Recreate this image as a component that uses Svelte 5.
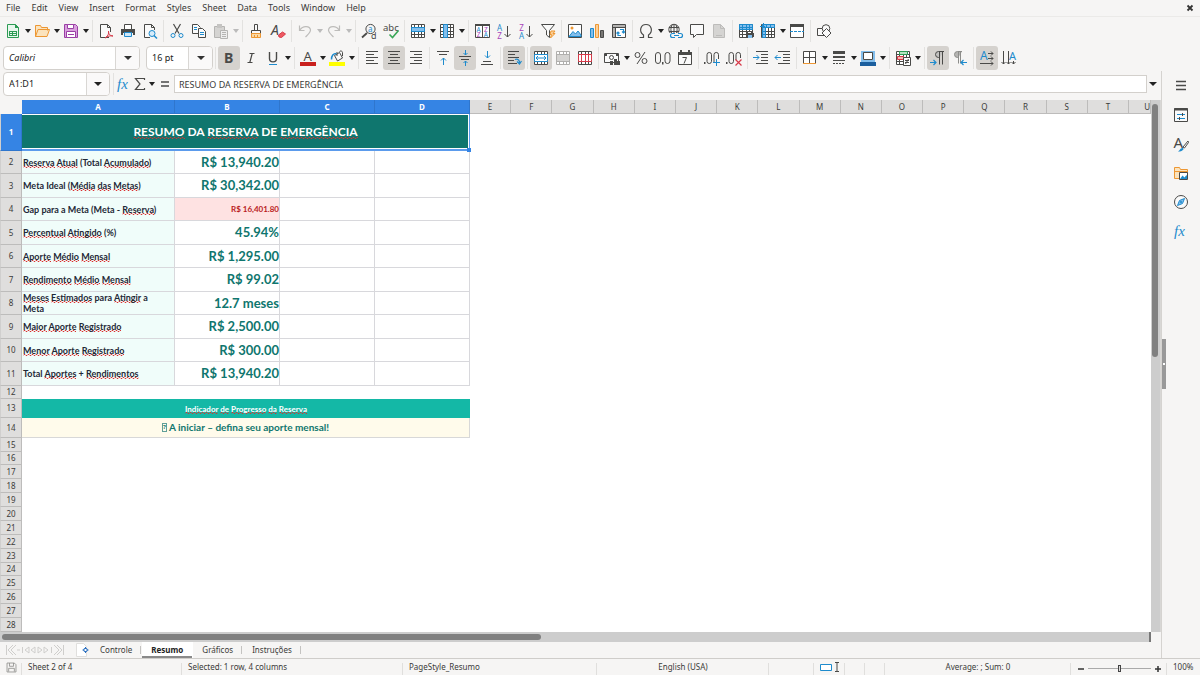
<script>
  const K = '#4a4a48', B = '#1e8bcd', L = '#83beec', R = '#d73a49', G = '#8d8d8a';
  const grid = (c = K) =>
    `<path fill="#fff" stroke="${c}" d="M1.5 1.5h13v13h-13z"/><path stroke="${c}" d="M1.5 4.5h13M1.5 8.5h13M1.5 11.5h13M4.5 1.5v13M8.5 1.5v13M11.5 1.5v13"/>`;
  const lines = (rows, c = K) => `<path stroke="${c}" d="${rows.map(([x, y, w]) => `M${x} ${y}.5h${w}`).join('')}"/>`;
  const letter = (x, y, s, c, t, extra = '') =>
    `<text x="${x}" y="${y}" font-size="${s}" fill="${c}" font-family="Noto Sans, sans-serif" ${extra}>${t}</text>`;

  const icons = {
    new: `<path fill="#e9f7ee" stroke="#2c9b54" d="M2.5 1.5h8l3 3v10h-11z"/><path fill="#2c9b54" d="M10 1v4h4zM4 8h8v5H4z"/><path stroke="#e9f7ee" d="M5 9.5h2M8 9.5h3M5 11.5h2M8 11.5h3"/>`,
    open: `<path fill="#fbe3bd" stroke="#ed9733" d="M1.5 13.5v-11h5l1 2h6v3M1.5 13.5l2.5-7h11.5l-2.5 7z"/>`,
    save: `<path fill="#d9a0de" stroke="#9a3fa5" d="M1.5 1.5h11l2 2v11h-13z"/><path fill="#fff" stroke="#9a3fa5" d="M4.5 1.5h6v4h-6zM3.5 8.5h9v6h-9z"/><path stroke="#9a3fa5" d="M5 11.5h6"/>`,
    pdf: `<path fill="#fafafa" stroke="${K}" d="M11 14.5H2.5v-13h7l3 3V9"/><path stroke="${K}" d="M9.5 1.5v3h3"/><path stroke="${R}" d="M7 15c3-2 4-4 3.5-7 0 3 1 4.5 4.5 5-3-.5-5 0-8 2z"/>`,
    print: `<path fill="#fff" stroke="${K}" d="M4.5 6V1.5h7V6"/><path fill="${K}" d="M1 6h14v6h-2v-2H3v2H1z"/><path fill="#cfe6f7" stroke="${B}" d="M4.5 9.5h7v4h-7z"/>`,
    preview: `<path fill="#fafafa" stroke="${K}" d="M8 14.5H2.5v-13h7l3 3V7"/><path stroke="${K}" d="M9.5 1.5v3h3"/><circle cx="10" cy="10.5" r="3" fill="#d8ecfa" stroke="${B}"/><path stroke="${B}" stroke-width="1.5" d="M12 12.5l3 3"/>`,
    cut: `<path stroke="${K}" stroke-width="1.2" d="M4.5 1l5.5 9.5M11.5 1L6 10.5"/><circle cx="4" cy="12.5" r="2" stroke="${B}"/><circle cx="12" cy="12.5" r="2" stroke="${B}"/>`,
    copy: `<path fill="#fafafa" stroke="${K}" d="M7 10.5H1.5v-9h5l3 3"/><path stroke="${B}" d="M3 4.5h3M3 6.5h3"/><path fill="#fafafa" stroke="${K}" d="M7.5 5.5h4l3 3v6h-7z"/><path stroke="${B}" d="M9 9.5h4M9 11.5h4"/>`,
    paste: `<path fill="#d5d4d2" stroke="#b5b4b2" d="M1.5 3.5h10v11h-10z"/><path fill="#c5c4c2" d="M4 1h5v4H4z"/><path fill="#eee" stroke="#b5b4b2" d="M7.5 7.5h7v8h-7z"/><path stroke="#b5b4b2" d="M9 9.5h4M9 11.5h4M9 13.5h4"/>`,
    clone: `<path fill="#fafafa" stroke="${K}" d="M6.5 7.5v-6h3v6M3.5 7.5h9v3h-9z"/><path fill="#fbd9a5" stroke="#ed9733" d="M3.5 10.5h9v4h-9zM6.5 14v-2M9.5 14v-2"/>`,
    clear: `${letter(1, 12, 14, K, 'A', 'font-style="italic"')}<path fill="#ee5a62" stroke="${R}" d="M8.5 12l4-3 3 2-4 3.5-2.5-.5z"/>`,
    undo: `<path stroke="#bdbcba" stroke-width="1.2" d="M2.5 2.5v5h5M3 7c3-5 10-4 10.5 0 0 2.5-2 4-5 7"/>`,
    redo: `<path stroke="#bdbcba" stroke-width="1.2" d="M13.5 2.5v5h-5M13 7c-3-5-10-4-10.5 0 0 2.5 2 4 5 7"/>`,
    find: `<circle cx="9.5" cy="6" r="4.6" stroke="${K}"/><path stroke="${K}" stroke-width="1.8" d="M6 10l-5 4.5"/>${letter(7, 8.5, 8, B, 'a')}${letter(10, 15.5, 9, K, 'd')}`,
    abc: `${letter(0, 7.5, 9.5, K, 'abc')}<path stroke="#3aa757" stroke-width="1.6" d="M6.5 11.5l3 3 6-7"/>`,
    row: `${grid()}<path fill="${L}" stroke="${B}" d="M1.5 4.5h13v4h-13z"/>`,
    col: `${grid()}<path fill="${L}" stroke="${B}" d="M4.5 1.5h4v13h-4z"/>`,
    sort: `<path fill="#fff" stroke="${K}" d="M1.5 1.5h14v13h-14zM8.5 2v13"/><path stroke="${K}" stroke-width="2" d="M1 2h15"/>${letter(2.5, 8.5, 6.5, B, 'A')}${letter(2.8, 14, 6.5, '#a846b9', 'Z')}${letter(10, 8.5, 6.5, '#a846b9', 'Z')}${letter(9.8, 14, 6.5, B, 'A')}`,
    az: `${letter(1, 7.5, 8, B, 'A')}${letter(1.2, 15.5, 8, '#a846b9', 'Z')}<path stroke="${K}" d="M11.5 3v11M8.5 11l3 3 3-3"/>`,
    za: `${letter(1.2, 7.5, 8, '#a846b9', 'Z')}${letter(1, 15.5, 8, B, 'A')}<path stroke="${K}" d="M11.5 3v11M8.5 11l3 3 3-3"/>`,
    filter: `<path fill="#fafafa" stroke="${K}" d="M1.5 1.5h13l-5 6v7l-3-2.5V7.5z"/><path fill="#fbd09a" stroke="#ed9733" d="M11 8h4l-2 2.5h2L10.5 15l1-3.5H10z"/>`,
    image: `<path fill="#fff" stroke="${K}" d="M1.5 1.5h13v13h-13z"/><path fill="${L}" stroke="${B}" d="M2 13.5l4-5 2.5 2.5L11 8l3 4v1.5z"/><circle cx="5" cy="5" r="1.5" fill="#ed9733"/>`,
    chart: `<path fill="${L}" stroke="${B}" d="M1.5 5.5h3v9h-3z"/><path fill="#fbd09a" stroke="#ed9733" d="M6.5 1.5h3v13h-3z"/><path fill="#797774" stroke="${K}" d="M11.5 7.5h3v7h-3z"/>`,
    pivot: `<path fill="#fff" stroke="${K}" d="M1.5 1.5h13v13h-13zM1.5 4.5h13M4.5 1.5v13"/><path fill="#b5b4b2" d="M2 2h12v2H2zM2 5h2v9H2z"/><path stroke="${B}" stroke-width="1.2" d="M7 9v3.5h3M5.5 10.5L7 9l1.5 1.5M9 6.5h3.5V10M11 8.5l1.5 1.5L14 8.5"/>`,
    omega: `<path stroke="${K}" stroke-width="1.2" d="M1.5 14.5h4V12C.5 8.5 2.5 1.5 8 1.5s7.5 7 2.5 10.5v2.5h4"/>`,
    link: `<circle cx="7" cy="6.5" r="5.2" stroke="${K}"/><path stroke="${K}" d="M2 4.5h10M2 8.5h10M7 1.5v10M5 2C3.5 5 3.5 8 5 11M9 2c1.5 3 1.5 6 0 9"/><path fill="#f6f5f4" d="M3 10h13v6H3z"/><path stroke="${B}" stroke-width="1.2" d="M8 10.5H5.5a2 2 0 0 0 0 4H8M11 10.5h2.5a2 2 0 0 1 0 4H11M7 12.5h5"/>`,
    comment: `<path fill="#fafafa" stroke="${K}" d="M1.5 1.5h13v10h-7l-3 3v-3h-3z"/>`,
    page: `<path fill="#d5d4d2" stroke="#bdbcba" d="M2.5 1.5h7l4 4v9h-11z"/><path stroke="#bdbcba" d="M9.5 1.5v4h4M5 12.5h6"/>`,
    printarea: `${grid()}<path fill="${L}" stroke="${B}" d="M1.5 1.5h13v5h-13z"/><path stroke="${B}" d="M4.5 1.5v5M8.5 1.5v5M11.5 1.5v5M1.5 4.5h13"/><path fill="#fff" stroke="${K}" d="M9.5 8.5h4v2h-4z"/><path fill="${K}" d="M8 10h8v4H8z"/><path fill="${L}" d="M10 12h4v3h-4z"/>`,
    freeze: `${grid()}<path fill="${L}" stroke="${B}" d="M2.5 1.5h12v3h-12zM2.5 4.5h3v10h-3z"/><path stroke="${B}" d="M0 3.5h5M3.5 0v5M6.5 1.5v3M10.5 1.5v3M2.5 8.5h3M2.5 11.5h3"/>`,
    split: `<path fill="#fff" stroke="${K}" d="M1.5 2.5h13v12h-13z"/><path stroke="${K}" stroke-width="3" d="M1 2.5h14"/><path stroke="${B}" stroke-dasharray="3 1" d="M1 8.5h14"/>`,
    shapes: `<path fill="#fafafa" stroke="${K}" d="M1.5 5.5h7v7h-7z"/><circle cx="10" cy="5.5" r="3.8" fill="#fafafa" stroke="${K}"/><path fill="#fafafa" stroke="${K}" d="M10.5 5.5l4.5 4.5-4.5 4.5L6 10z"/>`,
    bold: letter(3, 13, 14, K, 'B', 'font-weight="700"'),
    italic: `<path stroke="${K}" stroke-width="1.2" d="M6.5 3.5h5M4.5 12.5h5M9.2 3.5l-2.4 9"/>`,
    underline: `<path stroke="${K}" stroke-width="1.4" d="M4.5 2v6.5c0 4.5 7 4.5 7 0V2"/><path stroke="${B}" d="M4 14.5h8"/>`,
    color: `${letter(3.5, 11, 13, K, 'A')}<path fill="#c9211e" d="M0 12h16v4H0z"/>`,
    fill: `<path fill="#fafafa" stroke="${K}" d="M5.5 5.5l5-3 3 5.5-5 3zM8 2v4M10.5 2c1-2 3-1 3 1v3"/><path stroke="${B}" stroke-width="1.5" d="M2.5 9.5c0-4 1-6 5-6"/><path fill="#ff0" d="M0 12h16v4H0z"/>`,
    left: lines([[2, 1, 12], [2, 4, 8], [2, 7, 12], [2, 10, 8], [2, 13, 12]]),
    center: lines([[2, 1, 12], [4, 4, 8], [2, 7, 12], [4, 10, 8], [2, 13, 12]]),
    right: lines([[2, 1, 12], [6, 4, 8], [2, 7, 12], [6, 10, 8], [2, 13, 12]]),
    top: `${lines([[2, 1, 12], [4, 4, 8]])}<path stroke="${B}" d="M8.5 15V8M6 10.5L8.5 8l2.5 2.5"/>`,
    middle: `${lines([[2, 6, 12], [4, 9, 8]])}<path stroke="${B}" d="M8.5 0v5M6.5 3l2 2 2-2M8.5 16v-5M6.5 13l2-2 2 2"/>`,
    bottom: `${lines([[4, 11, 8], [2, 14, 12]])}<path stroke="${B}" d="M8.5 1v7M6 5.5L8.5 8 11 5.5"/>`,
    wrap: `${lines([[2, 1, 11], [2, 4, 7], [2, 7, 11], [2, 10, 6], [2, 13, 9]])}<path stroke="${B}" stroke-width="1.2" d="M9 9.500c3-1 5 1 4.500 4M11 11.500l2.500 2.500 2-3"/>`,
    merge: `${grid()}<path fill="#fff" stroke="${B}" d="M1.5 4.5h13v7h-13z"/><path stroke="${B}" d="M3 8h10M5 6L3 8l2 2M11 6l2 2-2 2"/>`,
    unmerge: `${grid('#b0afad')}<path fill="#d5d4d2" d="M2 5h12v6H2z"/>`,
    unsplit: `${grid()}<path fill="#fff" stroke="${R}" d="M1.5 4.5h13v7h-13zM4.5 4.5v7M8.5 4.5v7M11.5 4.5v7"/>`,
    currency: `<path fill="#fafafa" stroke="${K}" d="M.5 3.5h14v9H.5z"/><circle cx="7.500" cy="7.500" r="2" stroke="${K}"/><path fill="${K}" d="M1 4h2v2H1zM12 4h2v2h-2zM6 11h3v4H6zM10 9h3v6h-3zM13 11h3v4h-3z"/>`,
    percent: `<circle cx="4.5" cy="5" r="2.5" stroke="${K}"/><circle cx="11.5" cy="11" r="2.5" stroke="${K}"/><path stroke="${K}" d="M12 2L4 14"/>`,
    number: `<rect x=".5" y="2.5" width="5" height="11" rx="2.5" stroke="${K}"/><rect x="10" y="2.5" width="5" height="11" rx="2.5" stroke="${K}"/><path fill="${K}" d="M7 12h1.500v2.500H7z"/>`,
    date: `<path fill="#fafafa" stroke="${K}" d="M1.5 2.5h13v12h-13z"/><path fill="${K}" d="M1 2h14v3H1zM3 0h2v3H3zM11 0h2v3h-2z"/><path stroke="${K}" d="M5.5 7.5h4l-2.500 6"/>`,
    decadd: `<path fill="${K}" d="M0 12h1.500v2H0z"/><rect x="3" y="2.5" width="4.5" height="11" rx="2.2" stroke="${K}"/><path stroke="${K}" d="M10 12V4.700a2.200 2.200 0 0 1 4.500 0V9"/><path stroke="${B}" d="M9 12.5h7M12.5 9v7"/>`,
    decdel: `<path fill="${K}" d="M0 12h1.500v2H0z"/><rect x="3" y="2.5" width="4.5" height="11" rx="2.2" stroke="${K}"/><path stroke="${K}" d="M10 10V4.700a2.200 2.200 0 0 1 4.500 0V8"/><path stroke="${R}" stroke-width="1.2" d="M9.5 9.5l6 6M15.5 9.5l-6 6"/>`,
    indent: `${lines([[3, 1, 12], [8, 4, 7], [8, 7, 7], [8, 10, 7], [3, 13, 12]])}<path stroke="${B}" d="M0 7.5h6M3.5 5L6 7.5 3.5 10"/>`,
    outdent: `${lines([[3, 1, 12], [8, 4, 7], [8, 7, 7], [8, 10, 7], [3, 13, 12]])}<path stroke="${B}" d="M0 7.5h6M2.5 5L0 7.5 2.5 10"/>`,
    borders: `<path fill="#fff" stroke="${K}" d="M1.5 1.5h12v12h-12zM7.5 1.5v12M1.5 7.5h12"/><path stroke="#ed9733" d="M1 13.5h13"/>`,
    linestyle: `<path stroke="${K}" stroke-width="3" d="M2 2.500h12"/><path stroke="${K}" stroke-width="2" d="M2 7h12"/><path stroke="${K}" d="M2 10.500h12"/><path stroke="${K}" stroke-dasharray="2 1" d="M2 13.500h12"/>`,
    linecolor: `<path fill="#fff" stroke="${L}" stroke-width="2" d="M2 2h12v9H2z"/><path stroke="${K}" d="M3.500 2.500h9v7h-9z"/><path fill="#1c5f9e" d="M0 12h16v4H0z"/>`,
    cond: `${grid()}<path fill="#b6e3c1" stroke="#2c9b54" d="M4.500 1.500h8v3h-8z"/><path fill="#f7b4b0" stroke="${R}" d="M2.500 6.500h6v3h-6z"/><path fill="#fff" stroke="${K}" d="M8.500 7.500h7v8h-7z"/><path stroke="${K}" d="M10 10.500h4M10 12.500h4M13.500 9l-3 5"/>`,
    ltr: `<path fill="#c3c2c0" stroke="${K}" d="M14 1.500H8.500a3 3 0 0 0 0 6h1M9.500 1.500v13M12.500 1.500v13"/><path stroke="${B}" stroke-width="1.2" d="M0 12.500h6M3.500 10L6 12.500 3.500 15"/>`,
    rtl: `<path fill="#b5b4b2" stroke="${G}" d="M10 1.500H5.500a3 3 0 0 0 0 6h1M6.500 1.500v12M8.500 1.500v12"/><path stroke="${B}" stroke-width="1.2" d="M9 12.500h6M11.500 10L9 12.500l2.500 2.500"/>`,
    horiz: `${letter(1, 10, 12, B, 'A')}<path stroke="${K}" d="M9 3.500h5M9 8.500h5M1 13.500h13M12 1.500l2 2-2 2M12 6.500l2 2-2 2M12 11.500l2 2-2 2"/>`,
    vert: `${letter(8, 10, 11, B, 'A')}<path stroke="${K}" d="M2.500 1v13M7.500 1v13M12.500 11v3M.5 12l2 2 2-2M5.500 12l2 2 2-2M10.500 12l2 2 2-2"/>`,
    fx: letter(1, 12.5, 15, B, 'fx', 'font-style="italic" style="font-family:\'Liberation Serif\',serif"'),
    sigma: `<path stroke="${K}" stroke-width="1.2" d="M12.500 4V2.500h-9l4.500 5.500-4.500 5.500h9V12"/>`,
    menu: `<path stroke="${K}" stroke-width="1.6" d="M3 3.500h10M3 7.500h10M3 11.500h10"/>`,
    props: `<path fill="#fafafa" stroke="${K}" d="M1.5 1.5h13v13h-13z"/><path stroke="${K}" stroke-width="2" d="M1 2.500h14"/><path stroke="${B}" d="M4 7.500h8M4 11.500h8"/><path stroke="${K}" d="M9.500 6v3M6.500 10v3"/>`,
    style: `${letter(0.5, 12, 15, K, 'A')}<path fill="#fff" stroke="${K}" d="M15 5l-5 6 1.500 1 4-5.500z"/><path fill="${B}" d="M4 15.500c3 0 3-4 6-3.500 2 1-1 4-6 3.500z"/>`,
    gallery: `<path fill="#fbe3bd" stroke="#ed9733" d="M1.500 13.500v-11h5l1 2h7v9z"/><path stroke="#ed9733" d="M1.500 6.500h13"/><path fill="#fff" stroke="${K}" d="M6.500 7.500h8v7h-8z"/><path fill="${B}" d="M7 14l2.500-3.500 2 2 2-2.500.5 1v3z"/>`,
    navigator: `<circle cx="8" cy="8" r="6.500" fill="#fafafa" stroke="${K}"/><path fill="${L}" stroke="${B}" d="M11.500 4.500l-2 5-5 2 2-5z"/><circle cx="8" cy="8" r="1" fill="${B}"/>`,
    doc: `<path stroke="#8d8d8a" d="M2.500 2.500h9l2 2v9h-11zM5.500 2.500v4h5v-4M4.500 13v-4h7v4"/>`
  };

  // Toolbar entries: name, label, flags (v = has a drop-down arrow, a = active, d = disabled); '|' separates groups.
  const standard = [
    ['new', 'New', 'v'], ['open', 'Open', 'v'], ['save', 'Save', 'v'], '|',
    ['pdf', 'Export as PDF'], ['print', 'Print'], ['preview', 'Print Preview'], '|',
    ['cut', 'Cut'], ['copy', 'Copy'], ['paste', 'Paste', 'vd'], '|',
    ['clone', 'Clone Formatting'], ['clear', 'Clear Formatting'], '|',
    ['undo', 'Undo', 'vd'], ['redo', 'Redo', 'vd'], '|',
    ['find', 'Find and Replace'], ['abc', 'Spelling'], '|',
    ['row', 'Row', 'v'], ['col', 'Column', 'v'], '|',
    ['sort', 'Sort'], ['az', 'Sort Ascending'], ['za', 'Sort Descending'], ['filter', 'AutoFilter'], '|',
    ['image', 'Insert Image'], ['chart', 'Insert Chart'], ['pivot', 'Insert Pivot Table'], '|',
    ['omega', 'Special Character', 'v'], ['link', 'Insert Hyperlink'], ['comment', 'Insert Comment'], ['page', 'Headers and Footers', 'd'], '|',
    ['printarea', 'Define Print Area'], ['freeze', 'Freeze Rows and Columns', 'v'], ['split', 'Split Window'], '|',
    ['shapes', 'Show Draw Functions']
  ];
  const formatting = [
    ['bold', 'Bold', 'a'], ['italic', 'Italic'], ['underline', 'Underline', 'v'], '|',
    ['color', 'Font Color', 'v'], ['fill', 'Background Color', 'v'], '|',
    ['left', 'Align Left'], ['center', 'Center Horizontally', 'a'], ['right', 'Align Right'], '|',
    ['top', 'Align Top'], ['middle', 'Center Vertically', 'a'], ['bottom', 'Align Bottom'], '|',
    ['wrap', 'Wrap Text', 'a'], '|',
    ['merge', 'Merge and Center', 'a'], ['unmerge', 'Merge Cells', 'd'], ['unsplit', 'Unmerge Cells'], '|',
    ['currency', 'Currency', 'v'], ['percent', 'Percent'], ['number', 'Number'], ['date', 'Date'], '|',
    ['decadd', 'Add Decimal Place'], ['decdel', 'Delete Decimal Place'], '|',
    ['indent', 'Increase Indent'], ['outdent', 'Decrease Indent'], '|',
    ['borders', 'Borders', 'v'], ['linestyle', 'Border Style', 'v'], ['linecolor', 'Border Color', 'v'], '|',
    ['cond', 'Conditional Formatting', 'v'], '|',
    ['ltr', 'Left-To-Right', 'a'], ['rtl', 'Right-To-Left'], '|',
    ['horiz', 'Text direction horizontal', 'a'], ['vert', 'Text direction vertical']
  ];
  const menus = ['File', 'Edit', 'View', 'Insert', 'Format', 'Styles', 'Sheet', 'Data', 'Tools', 'Window', 'Help'];
  const columns = [...'ABCDEFGHIJKLMNOPQRSTU'];
  const free = columns.slice(4);

  // Words between underscores carry the spell-check wave.
  const rows = [
    ['_Reserva_ _Atual_ (Total _Acumulado_)', 'R$ 13,940.20'],
    ['Meta Ideal (_Média_ _das_ _Metas_)', 'R$ 30,342.00'],
    ['Gap para a Meta (Meta - _Reserva_)', 'R$ 16,401.80'],
    ['_Percentual_ _Atingido_ (%)', '45.94%'],
    ['_Aporte_ _Médio_ _Mensal_', 'R$ 1,295.00'],
    ['_Rendimento_ _Médio_ _Mensal_', 'R$ 99.02'],
    ['_Meses_ _Estimados_ para _Atingir_ a Meta', '12.7 meses'],
    ['_Maior_ _Aporte_ _Registrado_', 'R$ 2,500.00'],
    ['_Menor_ _Aporte_ _Registrado_', 'R$ 300.00'],
    ['Total _Aportes_ + _Rendimentos_', 'R$ 13,940.20']
  ];
  const blank = Array.from({ length: 14 }, (_, i) => i + 15);
  const sheets = ['Controle', 'Resumo', 'Gráficos', 'Instruções'];
  const panels = [['menu', 'Sidebar Settings'], ['props', 'Properties'], ['style', 'Styles'], ['gallery', 'Gallery'], ['navigator', 'Navigator'], ['fx', 'Functions']];
  let formula = $state('RESUMO DA RESERVA DE EMERGÊNCIA');
  let zoom = $state(50);
</script>

{#snippet icon(name)}
  <svg class="icon" viewBox="0 0 16 16" fill="none" aria-hidden="true">{@html icons[name]}</svg>
{/snippet}

{#snippet tools(list)}
  {#each list as t}
    {#if t === '|'}
      <span class="sep"></span>
    {:else}
      {@const flags = t[2] ?? ''}
      <span class="tool" class:split={flags.includes('v')} class:off={flags.includes('d')}>
        <button class="btn" class:active={flags.includes('a')} aria-label={t[1]} disabled={flags.includes('d')}>{@render icon(t[0])}</button>
        {#if flags.includes('v')}<button class="more" aria-label="{t[1]} options"><i class="caret"></i></button>{/if}
      </span>
    {/if}
  {/each}
{/snippet}

{#snippet spelled(text)}{#each text.split('_') as part, i}{#if i % 2}<span class="wave">{part}</span>{:else}{part}{/if}{/each}{/snippet}

<div class="app">
  <nav class="menubar">
    {#each menus as m}<button>{m}</button>{/each}
    <button class="close" aria-label="Close document"><svg viewBox="0 0 8 8"><path d="M1.5 1.5l5 5M6.5 1.5l-5 5" stroke="#333" stroke-width="1.8" /></svg></button>
  </nav>
  <div class="toolbar">{@render tools(standard)}</div>
  <div class="toolbar second">
    <span class="combo font"><select aria-label="Font Name"><option>Calibri</option></select></span>
    <span class="combo size"><select aria-label="Font Size"><option>16 pt</option></select></span>
    <span class="sep"></span>
    {@render tools(formatting)}
  </div>

  <div class="body">
    <main>
      <div class="formulabar">
        <span class="namebox"><input aria-label="Name Box" value="A1:D1" /><button aria-label="Named ranges"><i class="caret big"></i></button></span>
        <span class="sep"></span>
        <button class="fb" aria-label="Function Wizard">{@render icon('fx')}</button>
        <button class="fb sum" aria-label="Select Function">{@render icon('sigma')}<i class="caret"></i></button>
        <button class="fb eq" aria-label="Formula"><svg viewBox="0 0 8 6"><path d="M0 1h8M0 5h8" stroke="#4a4a48" stroke-width="1.5" /></svg></button>
        <input class="formula" aria-label="Input line" bind:value={formula} />
        <button class="expand" aria-label="Expand Formula Bar"><i class="caret big"></i></button>
      </div>

      <div class="sheetwrap">
        <div class="sheet">
          <table>
            <colgroup>
              <col class="c-head" /><col class="c-a" /><col class="c-b" /><col class="c-c" /><col class="c-c" />
              {#each free as c}<col class:c-last={c === 'U'} />{/each}
            </colgroup>
            <thead>
              <tr><th></th>{#each columns as c, i}<th class:sel={i < 4} scope="col">{c}</th>{/each}</tr>
            </thead>
            <tbody>
              <tr class="r-title">
                <th class="sel" scope="row">1</th>
                <td class="title" colspan="4">{@render spelled('_RESUMO_ DA _RESERVA_ DE _EMERGÊNCIA_')}<i class="handle"></i></td>
                <td colspan="17"></td>
              </tr>
              {#each rows as [label, value], i}
                <tr class="r-data">
                  <th scope="row">{i + 2}</th>
                  <td class="label"><div>{@render spelled(label)}</div></td>
                  <td class="value" class:gap={i === 2}>{value}</td>
                  <td class="cell"></td><td class="cell"></td>
                  <td colspan="17"></td>
                </tr>
              {/each}
              <tr class="r-free"><th scope="row">12</th><td colspan="21"></td></tr>
              <tr class="r-band"><th scope="row">13</th><td class="band" colspan="4">{@render spelled('_Indicador_ _de_ _Progresso_ _da_ _Reserva_')}</td><td colspan="17"></td></tr>
              <tr class="r-note"><th scope="row">14</th><td class="note" colspan="4"><span class="tofu">?</span> A iniciar – defina seu aporte mensal!</td><td colspan="17"></td></tr>
              {#each blank as n}
                <tr class="r-free" class:short={n % 8 === 0}><th scope="row">{n}</th><td colspan="21"></td></tr>
              {/each}
            </tbody>
          </table>
        </div>
        <div class="vscroll"><i></i></div>
      </div>
      <div class="hscroll"><i></i></div>

      <div class="tabs">
        <svg class="tabnav" viewBox="0 0 62 12" fill="none" stroke="#cfcecc" aria-hidden="true"><path d="M2.5 1v10M12 1L7 6l5 5M9 1L4 6l5 5M13 6h3M18.5 3v6M25 3l-4 3 4 3zM31 3l-4 3 4 3zM34 3l4 3-4 3zM40 3l4 3-4 3zM47.5 3v6M50 1l5 5-5 5M53 1l5 5-5 5M59.5 1v10" /></svg>
        <button class="addtab" aria-label="Add sheet"><svg viewBox="0 0 14 14" fill="none"><path d="M.5.5h7l3 3v10H.5z" fill="#fff" stroke="#e0dfdd" /><circle cx="9.5" cy="7" r="1.8" fill="#fff" stroke="#2a6fc0" /><path d="M9.5 4v2M9.5 8v2M6.5 7h2M10.500 7h2" stroke="#2a6fc0" /></svg></button>
        {#each sheets as s}<button class="tab" class:current={s === 'Resumo'}>{s}</button>{/each}
      </div>
    </main>
    <aside>
      <i class="grip"></i>
      {#each panels as [name, label]}<button aria-label={label}>{@render icon(name)}</button>{/each}
    </aside>
  </div>

  <footer>
    <span class="state">{@render icon('doc')}</span>
    <span>Sheet 2 of 4</span>
    <span>Selected: 1 row, 4 columns</span>
    <span>PageStyle_Resumo</span>
    <span class="mid">English (USA)</span>
    <span></span>
    <span class="mode"><svg viewBox="0 0 20 12" fill="none"><path d="M.5 3.5h11v6H.5z" stroke="#1e8bcd" fill="#fff" /><path d="M15 1.5h4M17 1.5v9M15 10.5h4" stroke="#4a4a48" /></svg></span>
    <span></span>
    <span></span>
    <span class="mid">Average: ; Sum: 0</span>
    <span class="zoom">
      <button aria-label="Zoom Out"><svg viewBox="0 0 8 8"><path d="M1 4h6" stroke="#333" stroke-width="1.5" /></svg></button>
      <input type="range" aria-label="Zoom" min="0" max="100" bind:value={zoom} />
      <button aria-label="Zoom In"><svg viewBox="0 0 8 8"><path d="M1 4h6M4 1v6" stroke="#333" stroke-width="1.5" /></svg></button>
    </span>
    <span class="pct">100%</span>
  </footer>
</div>

<style>
  :global(body) { background: #f6f5f4; }
  .app { display: flex; flex-direction: column; height: 100vh; overflow: hidden; background: #f6f5f4; color: #3b3b39; font: 9px/12px 'Noto Sans', sans-serif; }
  .app * { box-sizing: border-box; }
  button, input, select { font: inherit; color: inherit; border: 0; background: none; padding: 0; margin: 0; }
  button { display: flex; align-items: center; justify-content: center; }
  .icon { width: 16px; height: 16px; display: block; flex: none; overflow: visible; }
  .caret { border: 3px solid transparent; border-top: 4px solid #222; border-bottom: 0; }
  .caret.big { border-width: 4px 4px 0; }

  .menubar { display: flex; gap: 11px; height: 17px; padding: 0 6px; border-bottom: 1px solid #ebeae8; flex: none; }
  .close { margin-left: auto; }
  .close svg { width: 8px; height: 8px; }

  .toolbar { display: flex; align-items: center; height: 27px; padding-left: 2px; flex: none; }
  .second { padding-left: 3px; }
  .tool { display: flex; align-items: center; flex: none; }
  .btn { width: 22px; height: 24px; border-radius: 3px; }
  .btn.active { background: #d5d2ce; }
  .more { width: 7px; height: 24px; }
  .off .caret { border-top-color: #bbb; }
  .sep { width: 1px; height: 22px; margin: 0 2px; background: #e3e2e0; flex: none; }
  .split + .sep { margin-left: 3px; }
  .combo { position: relative; height: 24px; border: 1px solid #d3d0cc; border-radius: 4px; background: #fff; flex: none; }
  .combo select { appearance: none; width: 100%; height: 100%; padding-left: 5px; color: #222; }
  .combo::before { content: ''; position: absolute; right: 0; top: 0; bottom: 0; width: 23px; border-left: 1px solid #d9d7d4; border-radius: 0 3px 3px 0; background: #faf9f9; pointer-events: none; }
  .combo::after { content: ''; position: absolute; right: 7px; top: 9px; border: 4px solid transparent; border-top-color: #333; border-bottom: 0; pointer-events: none; }
  .font { width: 137px; margin-right: 6px; }
  .font select { font-style: italic; }
  .size { width: 67px; }

  .body { display: flex; flex: 1; min-height: 0; }
  main { display: flex; flex-direction: column; flex: 1; min-width: 0; }
  .formulabar { display: flex; align-items: center; height: 29px; padding: 0 4px 3px 3px; flex: none; }
  .namebox { display: flex; width: 107px; height: 24px; margin-right: 1px; border: 1px solid #d3d0cc; border-radius: 4px; background: #fff; overflow: hidden; }
  .namebox input { flex: 1; min-width: 0; padding-left: 5px; color: #222; }
  .namebox button { width: 23px; border-left: 1px solid #d9d7d4; background: #faf9f9; }
  .fb { height: 22px; }
  .sum { gap: 1px; }
  .eq { width: 19px; }
  .eq svg { width: 8px; height: 6px; }
  .formula { flex: 1; min-width: 0; height: 18px; margin-right: 2px; padding: 0 4px; border: 1px solid #d3d0cc; background: #fff; color: #3b3b39; }
  .expand { width: 8px; height: 18px; }

  .sheetwrap { display: flex; flex: 1; min-height: 0; }
  .sheet { flex: 1; min-width: 0; overflow: hidden; background: #fff; }
  table { width: 100%; table-layout: fixed; border-collapse: separate; border-spacing: 0; }
  .c-head { width: 22px; }
  .c-a { width: 153px; }
  .c-b { width: 105px; }
  .c-c { width: 95px; }
  .c-last { width: 22px; }
  th { padding: 0; font-size: 8px; line-height: 10px; font-weight: 400; color: #3b3b39; background: #dfdedd; border: 0 solid #bdbcbb; border-width: 0 1px 1px 0; text-align: center; vertical-align: middle; overflow: hidden; }
  thead th { height: 14px; }
  thead th:first-child { background: #f6f5f4; border-color: #f6f5f4; }
  thead th:last-child { text-align: right; }
  th.sel { background: #3584e4; border-color: #2f76cd; color: #fff; font-weight: 700; }
  td { padding: 0; font-family: Lato, Carlito, sans-serif; font-weight: 700; vertical-align: middle; }
  .r-title { height: 37px; }
  .r-data { height: 23px; }
  .r-data:nth-child(odd) { height: 24px; }
  .r-free { height: 14px; }
  .r-free.short, .r-free:nth-child(12) { height: 13px; }
  .r-band { height: 19px; }
  .r-note { height: 20px; }
  tbody th:first-child { border-left: 1px solid #d0cfce; }
  .title { position: relative; background: #0f766e; color: #fff; font-size: 12px; line-height: 16px; text-align: center; border: solid #5b9bec; border-width: 0 1px 2px 0; box-shadow: inset 0 1px #fff, inset 0 -1px #fff, inset -1px 0 #fff; }
  .handle { position: absolute; right: -2px; bottom: -3px; width: 4px; height: 4px; background: #3584e4; }
  .label, .value, .cell { border: solid #d8d8dc; border-width: 0 1px 1px 0; }
  .label { padding-left: 1px; background: #f0fdfa; color: #1f2937; font-size: 9px; line-height: 11px; }
  .label div { padding-right: 10px; }
  .value { background: #fff; color: #0f766e; font-size: 13px; line-height: 16px; text-align: right; padding-bottom: 1px; }
  .value.gap { background: #fee2e2; color: #b91c1c; font-size: 8px; line-height: 10px; }
  .band { background: #14b8a6; color: #fff; font-size: 8px; line-height: 10px; text-align: center; }
  .note { background: #fffbeb; color: #0f766e; font-size: 10px; line-height: 12px; text-align: center; border: solid #d8d8d8; border-width: 0 1px 1px 0; }
  .tofu { display: inline-block; width: 5px; height: 9px; border: 1px solid #5f9f98; font: 700 6px/7px 'Noto Sans', sans-serif; text-indent: 0; vertical-align: middle; margin-bottom: 2px; }
  .wave { background: url("data:image/svg+xml,%3Csvg xmlns='http://www.w3.org/2000/svg' width='4' height='2'%3E%3Cpath d='M0 1.5L1 .5h1l1 1h1' fill='none' stroke='%23d93030'/%3E%3C/svg%3E") left bottom repeat-x; }

  .vscroll { width: 10px; padding: 4px 2px 0 1px; background: #cdcdcd; border-right: 1px solid #d8d7d5; }
  .vscroll i { display: block; height: 48%; border-radius: 4px; background: #808080; }
  .hscroll { height: 10px; margin-right: 10px; padding: 2px 0 2px 2px; background: #cdcdcd; border-right: 2px solid #777; flex: none; }
  .hscroll i { display: block; width: 47%; height: 6px; border-radius: 4px; background: #808080; }

  .tabs { display: flex; height: 16px; padding-left: 4px; font-size: 8px; line-height: 12px; flex: none; }
  .tabnav { width: 62px; height: 12px; margin: 2px 8px 0 0; }
  .addtab { width: 17px; }
  .addtab svg { width: 14px; height: 14px; }
  .tab { padding: 0 9px; border-right: 1px solid transparent; background: linear-gradient(#c4c3c1, #c4c3c1) right center / 1px 8px no-repeat; }
  .tab.current { background: #fff; font-weight: 700; color: #222; box-shadow: inset 0 -2px #8a8a8a; }

  aside { position: relative; display: flex; flex-direction: column; width: 39px; border-left: 1px solid #d5d3d0; flex: none; }
  aside button { height: 29px; }
  .grip { position: absolute; left: 0; top: 268px; width: 4px; height: 50px; background: #999; }
  .grip::after { content: ''; position: absolute; left: 1px; top: 24px; width: 2px; height: 2px; background: #fff; }

  footer { display: grid; grid-template-columns: 22px 160fr 221fr 194fr 172fr 45fr 31px 20px 20px 186fr 96px 33px; height: 17px; border-top: 1px solid #cfcdca; font-size: 8px; line-height: 16px; flex: none; }
  footer > span { padding-left: 6px; white-space: nowrap; background: linear-gradient(#e0dfdd, #e0dfdd) right center / 1px 12px no-repeat; }
  footer .state { padding: 2px 0 0 5px; }
  .state .icon { width: 13px; height: 13px; }
  footer .mid { padding: 0; text-align: center; }
  .mode svg { width: 20px; height: 12px; margin-top: 2px; }
  footer .zoom { display: flex; align-items: center; gap: 2px; padding: 0 4px 0 5px; }
  .zoom button { width: 10px; height: 14px; }
  .zoom svg { width: 8px; height: 8px; }
  .zoom input { appearance: none; flex: 1; min-width: 0; height: 9px; background: linear-gradient(#aaa, #aaa) center / 100% 1px no-repeat; }
  .zoom input::-webkit-slider-thumb { appearance: none; width: 3px; height: 7px; border: 1px solid #444; background: #ddd; }
  footer .pct { background: none; }
</style>
